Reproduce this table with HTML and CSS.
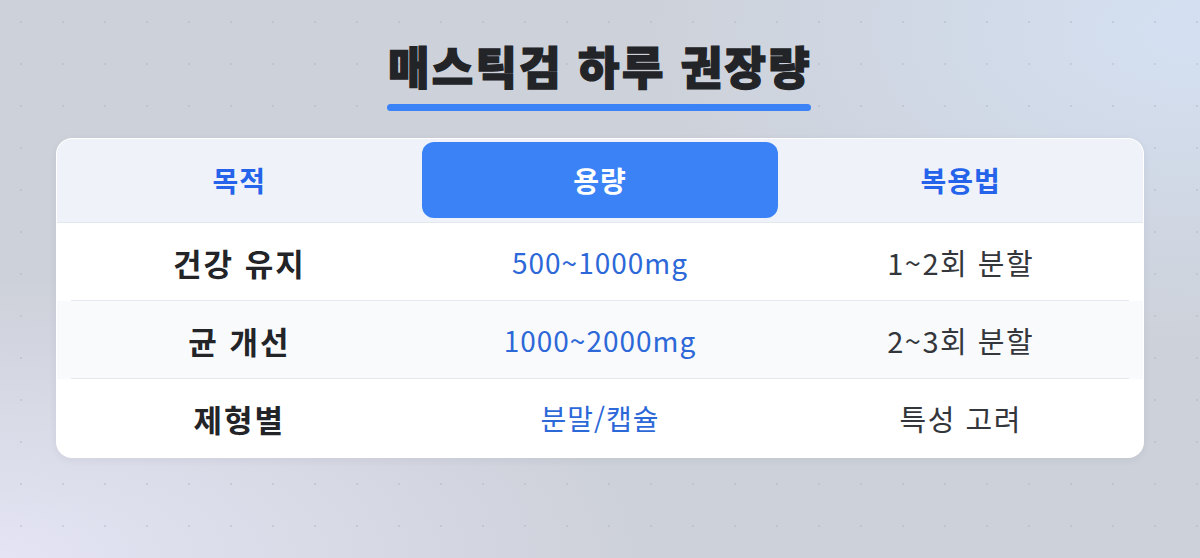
FILE: index.html
```html
<!DOCTYPE html>
<html lang="ko">
<head>
<meta charset="utf-8">
<link rel="stylesheet" href="styles.css">
</head>
<body>
<div class="page">
  <header class="heading">
    <h1 class="title">매스틱검 하루 권장량</h1>
    <div class="title-bar"></div>
  </header>
  <section class="card">
    <div class="tabs">
      <div class="tab">목적</div>
      <div class="tab active">용량</div>
      <div class="tab">복용법</div>
    </div>
    <div class="row">
      <div class="cell name">건강 유지</div>
      <div class="cell amount">500~1000mg</div>
      <div class="cell method">1~2회 분할</div>
    </div>
    <div class="row alt">
      <div class="cell name">균 개선</div>
      <div class="cell amount">1000~2000mg</div>
      <div class="cell method">2~3회 분할</div>
    </div>
    <div class="row last">
      <div class="cell name">제형별</div>
      <div class="cell amount">분말/캡슐</div>
      <div class="cell method">특성 고려</div>
    </div>
  </section>
</div>
</body>
</html>
```

FILE: styles.css
```css
* { box-sizing: border-box; }
html, body { margin: 0; padding: 0; }
body {
  width: 1200px;
  height: 558px;
  overflow: hidden;
  font-family: "Noto Sans CJK KR", "Noto Sans", sans-serif;
  background-color: #cdd1d9;
  background-image:
    radial-gradient(circle at 1px 1px, rgba(160,165,180,0.3) 1px, transparent 1.6px),
    radial-gradient(ellipse 560px 320px at 1200px 30px, rgba(212,224,242,1), rgba(212,224,242,0) 100%),
    radial-gradient(ellipse 640px 280px at 0px 558px, rgba(228,228,244,1), rgba(228,228,244,0) 100%);
  background-size: 42px 42px, 100% 100%, 100% 100%;
  background-position: 20px 21px, 0 0, 0 0;
}
.page {
  display: flex;
  flex-direction: column;
  align-items: center;
  padding-top: 34px;
}
.heading {
  display: flex;
  flex-direction: column;
  align-items: stretch;
}
.title {
  margin: 0;
  font-size: 45px;
  font-weight: 900;
  line-height: 64px;
  letter-spacing: 2.4px;
  color: #222428;
  -webkit-text-stroke: 1.4px #222428;
  text-align: center;
}
.title-bar {
  height: 7px;
  margin-top: 6px;
  margin-left: -1px;
  margin-right: 1px;
  border-radius: 4px;
  background: #3b82f6;
}
.card {
  margin-top: 27px;
  width: 1088px;
  background: #ffffff;
  border-radius: 16px;
  border: 1px solid rgba(255,255,255,0.7);
  box-shadow: 0 2px 8px rgba(30,40,70,0.06);
  overflow: hidden;
}
.tabs {
  display: grid;
  grid-template-columns: 1fr 1fr 1fr;
  gap: 4px;
  padding: 3px 4px 4px;
  background: #eff3f9;
  border-bottom: 1px solid #e3e8ef;
}
.tab {
  height: 76px;
  display: flex;
  align-items: center;
  justify-content: center;
  font-size: 28px;
  font-weight: 700;
  letter-spacing: 1px;
  color: #2563eb;
  border-radius: 12px;
}
.tab.active {
  background: #3b82f6;
  color: #ffffff;
}
.row {
  display: grid;
  grid-template-columns: 1fr 1fr 1fr;
  gap: 4px;
  padding: 0 4px;
  height: 78px;
  position: relative;
}
.row::after {
  content: "";
  position: absolute;
  left: 14px;
  right: 14px;
  bottom: 0;
  height: 1px;
  background: #e5e8ee;
}
.row.last::after { display: none; }
.row.alt { background: #f8fafc; }
.cell {
  display: flex;
  align-items: center;
  justify-content: center;
  font-size: 28px;
  letter-spacing: 1px;
}
.name {
  font-weight: 700;
  font-size: 31px;
  letter-spacing: 2px;
  color: #222428;
}
.amount {
  color: #2d68d8;
}
.method {
  color: #33363b;
  font-size: 29px;
  letter-spacing: 1.5px;
}
```
